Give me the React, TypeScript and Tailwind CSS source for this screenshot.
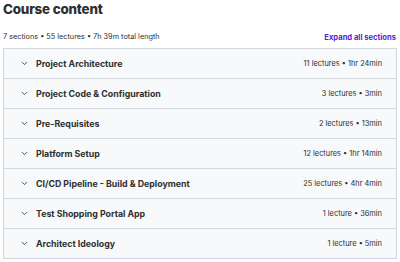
import { ChevronDown } from "lucide-react";

const sections = [
  { title: "Project Architecture", meta: "11 lectures • 1hr 24min" },
  { title: "Project Code & Configuration", meta: "3 lectures • 3min" },
  { title: "Pre-Requisites", meta: "2 lectures • 13min" },
  { title: "Platform Setup", meta: "12 lectures • 1hr 14min" },
  { title: "CI/CD Pipeline - Build & Deployment", meta: "25 lectures • 4hr 4min" },
  { title: "Test Shopping Portal App", meta: "1 lecture • 36min" },
  { title: "Architect Ideology", meta: "1 lecture • 5min" },
];

export default function App() {
  return (
    <div className="w-[400px] h-[262px] bg-white px-[3px] pt-[1px] font-['Inter',sans-serif] text-[#2d2f31]">
      <h2 className="text-[13.4px] font-extrabold leading-[17px] tracking-[-0.2px]">Course content</h2>

      <div className="mt-[14px] flex items-center justify-between pr-[1px]">
        <span className="text-[7.3px] text-[#2d2f31]">7 sections • 55 lectures • 7h 39m total length</span>
        <button className="text-[7.6px] font-bold text-[#5624d0]">Expand all sections</button>
      </div>

      {/* Section list */}
      <div className="mt-[5px] border border-[#d1d7dc]">
        {sections.map((s, i) => (
          <div
            key={i}
            className={`flex items-center bg-[#f7f9fa] pl-[16px] pr-[14px] ${
              i < sections.length - 1 ? "h-[30px] border-b border-[#d1d7dc]" : "h-[29px]"
            }`}
          >
            <ChevronDown className="h-[9px] w-[9px] text-[#2d2f31]" strokeWidth={2.2} />
            <span className="ml-[7px] flex-1 text-[8.8px] font-bold">{s.title}</span>
            <span className="text-[7.4px] text-[#2d2f31]">{s.meta}</span>
          </div>
        ))}
      </div>
    </div>
  );
}
